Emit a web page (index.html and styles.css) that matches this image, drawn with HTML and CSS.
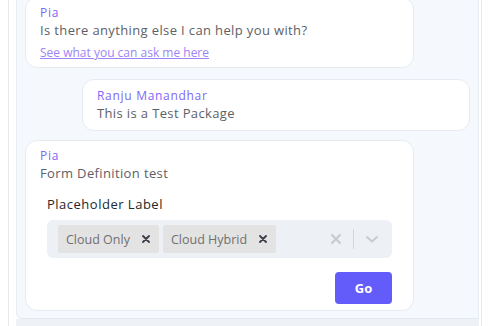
FILE: index.html
```html
<html>

<head>
    <title>Chat</title>
    <meta name="viewport" content="width=device-width, initial-scale=1.0">
    <link rel="stylesheet" href="styles.css">
</head>

<body>
    <div id="shell">
        <div id="panel">
            <div class="bubble bot first">
                <div class="sender">Pia</div>
                <div class="text">Is there anything else I can help you with?</div>
                <a class="help" href="#">See what you can ask me here</a>
            </div>
            <div class="bubble user">
                <div class="sender">Ranju Manandhar</div>
                <div class="text">This is a Test Package</div>
            </div>
            <div class="bubble bot last">
                <div class="sender">Pia</div>
                <div class="text">Form Definition test</div>
                <form class="form" onsubmit="return false;">
                    <div class="label">Placeholder Label</div>
                    <div class="select">
                        <div class="chips">
                            <span class="chip">Cloud Only
                                <svg class="chip-x" width="8" height="8" viewBox="0 0 8 8"><path d="M1 1L7 7M7 1L1 7" stroke="#3b4048" stroke-width="1.8" stroke-linecap="round"/></svg>
                            </span>
                            <span class="chip">Cloud Hybrid
                                <svg class="chip-x" width="8" height="8" viewBox="0 0 8 8"><path d="M1 1L7 7M7 1L1 7" stroke="#3b4048" stroke-width="1.8" stroke-linecap="round"/></svg>
                            </span>
                        </div>
                        <div class="controls">
                            <svg width="12" height="12" viewBox="0 0 12 12"><path d="M2 2L10 10M10 2L2 10" stroke="#c9cbce" stroke-width="2.2" stroke-linecap="round"/></svg>
                            <span class="sep"></span>
                            <svg width="14" height="10" viewBox="0 0 14 10"><path d="M2 3L7 7.5L12 3" stroke="#c9cbce" stroke-width="2" fill="none" stroke-linecap="round" stroke-linejoin="round"/></svg>
                        </div>
                    </div>
                    <div class="actions">
                        <button class="go">Go</button>
                    </div>
                </form>
            </div>
        </div>
        <div id="footer"></div>
    </div>
</body>

</html>
```

FILE: styles.css
```css
body {
    margin: 0;
    background: white;
    font-family: "Open Sans", sans-serif;
    overflow: hidden;
}

#shell {
    margin-left: 8px;
    width: 463px;
    height: 326px;
    border-left: 1px solid #e7eaee;
    border-right: 1px solid #e7eaee;
    padding-left: 7px;
    padding-right: 2px;
    display: flex;
    flex-direction: column;
}

#panel {
    height: 319px;
    flex-shrink: 0;
    background: #f5f8fc;
    border-left: 1px solid #e8edf4;
    border-right: 1px solid #e8edf4;
    border-bottom: 1px solid #e4e9f0;
    border-bottom-left-radius: 6px;
    display: flex;
    flex-direction: column;
    justify-content: flex-end;
    overflow: hidden;
    padding-bottom: 7px;
    box-sizing: border-box;
}

#footer {
    flex: 1;
    background: #eef2f7;
}

.bubble {
    background: white;
    border: 1px solid #e6ebf2;
    border-radius: 12px;
    padding: 7px 14px 6px 14px;
    flex-shrink: 0;
    box-sizing: border-box;
}

.bot {
    margin-left: 8px;
    width: 389px;
}

.user {
    margin-left: 65px;
    width: 388px;
    margin-top: 11px;
    margin-bottom: 9px;
    padding-top: 8px;
    padding-bottom: 8px;
}

.sender {
    font-size: 12px;
    line-height: 16px;
    letter-spacing: 0.7px;
    color: #8067f7;
}

.text {
    font-size: 13px;
    line-height: 18px;
    letter-spacing: 0.37px;
    color: #5d6166;
}

.help {
    display: inline-block;
    margin-top: 6px;
    font-size: 12px;
    line-height: 16px;
    color: #9c84f7;
}

.first {
    padding-bottom: 6px;
}

.form {
    margin: 13px 7px 0 7px;
}

.label {
    font-size: 13px;
    line-height: 18px;
    font-weight: 500;
    letter-spacing: 0.5px;
    color: #24272b;
    margin-bottom: 7px;
}

.select {
    height: 38px;
    background: #edf0f4;
    border-radius: 6px;
    display: flex;
    align-items: center;
    justify-content: space-between;
    padding: 0 13px 0 11px;
}

.chips {
    display: flex;
    gap: 4px;
}

.chip {
    background: #e3e3e3;
    border-radius: 2px;
    height: 28px;
    padding: 0 9px 0 8px;
    display: flex;
    align-items: center;
    font-size: 12.5px;
    color: #707070;
}

.chip-x {
    margin-left: 12px;
}

.controls {
    display: flex;
    align-items: center;
    gap: 11px;
}

.sep {
    width: 1px;
    height: 20px;
    background: #d3d5d8;
}

.actions {
    display: flex;
    justify-content: flex-end;
    margin-top: 14px;
}

.go {
    width: 57px;
    height: 32px;
    border: none;
    border-radius: 4px;
    background: #635bfa;
    color: white;
    font-family: "Open Sans", sans-serif;
    font-size: 13px;
    font-weight: 700;
}
```
